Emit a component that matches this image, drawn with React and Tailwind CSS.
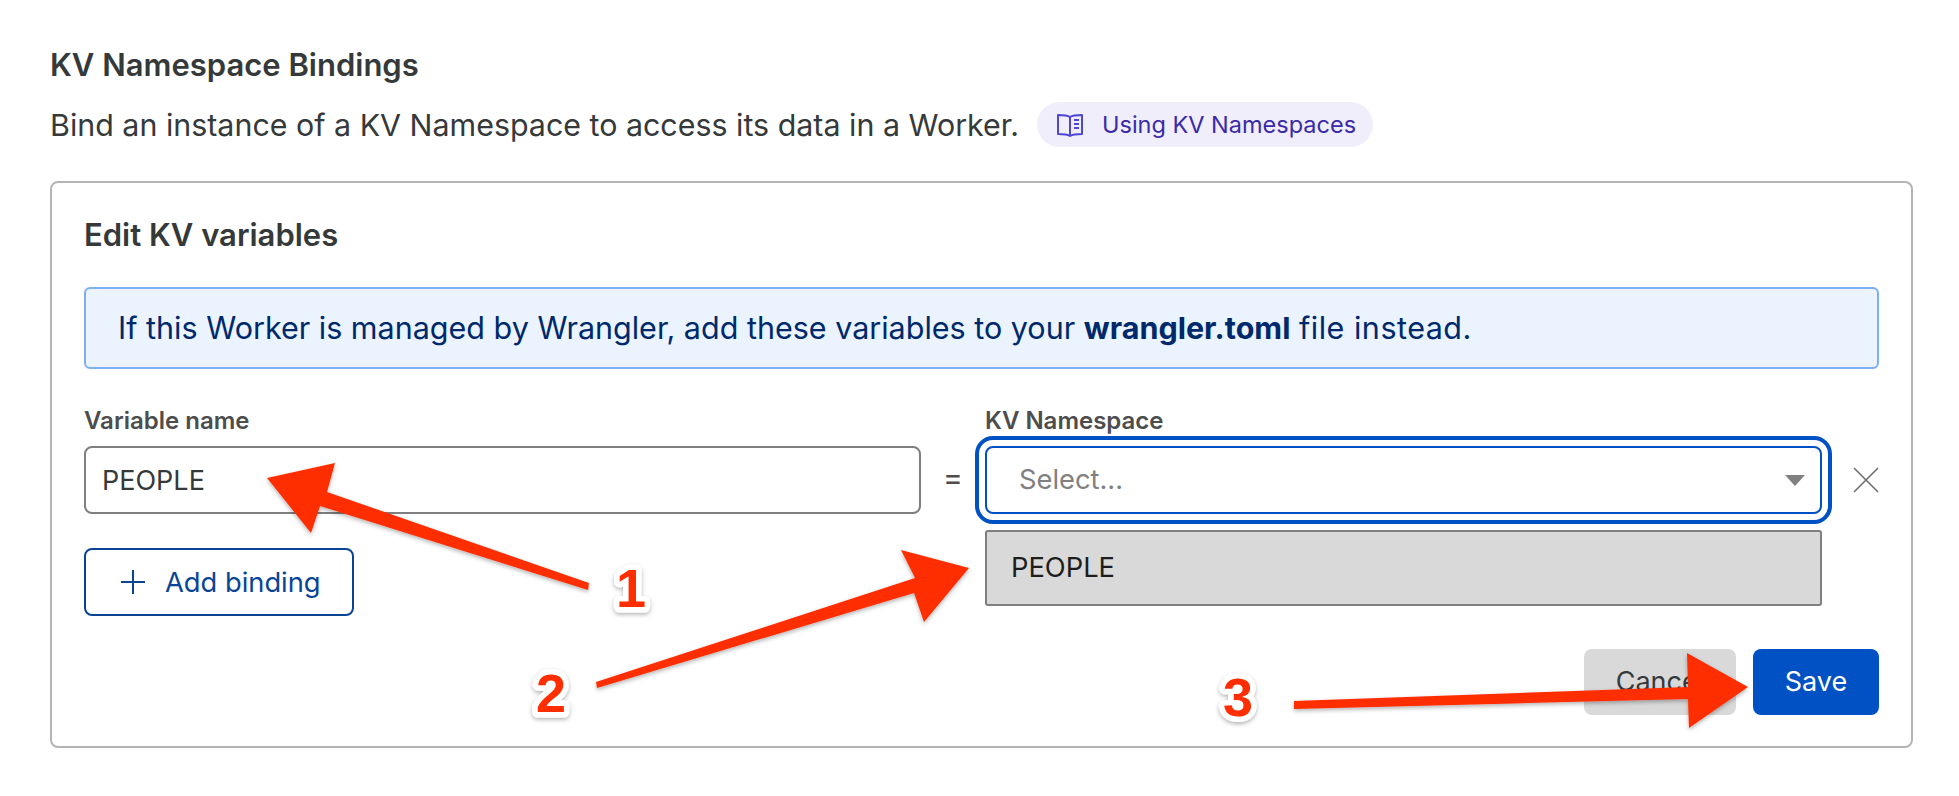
const BOOK = (
    <svg width="28" height="26" viewBox="0 0 28 26" fill="none" stroke="#4f46d8" strokeWidth="2">
        <path d="M14 5 C11 3 6 3 2 3 V22 C6 22 11 22 14 24 C17 22 22 22 26 22 V3 C22 3 17 3 14 5 Z" strokeLinejoin="round" />
        <path d="M14 5 V24" />
        <path d="M18 8 H23 M18 12 H23 M18 16 H23" strokeWidth="1.8" />
    </svg>
);

function Annotations() {
    return (
        <svg className="absolute inset-0 pointer-events-none" width="1959" height="796" viewBox="0 0 1959 796">
            <defs>
                <filter id="arrowShadow" x="-10%" y="-30%" width="120%" height="160%">
                    <feDropShadow dx="0" dy="2" stdDeviation="2" floodColor="#000" floodOpacity="0.3" />
                </filter>
            </defs>
            <g fill="#ff2d00" filter="url(#arrowShadow)">
                <polygon points="267,478 335,463 327,492 589,583 588,590 320,506 311,533" />
                <polygon points="969,568 901,550 915,578 596,682 597,688 914,593 924,622" />
                <polygon points="1748,687 1687,653 1688,687 1294,701 1294,709 1688,699 1689,728" />
            </g>
            <g fontFamily="'Liberation Sans', Arial, sans-serif" fontWeight="700" fontSize="54" fill="#ff2d00" stroke="#fff" strokeWidth="11" strokeLinejoin="round" textAnchor="middle" filter="url(#arrowShadow)" style={{ paintOrder: 'stroke' }}>
                <text x="631" y="607">1</text>
                <text x="551" y="712">2</text>
                <text x="1238" y="716">3</text>
            </g>
        </svg>
    );
}

export default function App() {
    return (
        <div className="relative h-[796px] w-[1959px] overflow-hidden bg-white pl-[50px] pr-[46px] pt-[46px] font-['Inter',sans-serif] text-[#36393a]">
            <h2 className="text-[31px] leading-[38px] font-semibold">KV Namespace Bindings</h2>
            <div className="mt-[18px] flex h-[45px] items-center">
                <p className="w-[971px] text-[30.4px] leading-[38px] whitespace-nowrap">Bind an instance of a KV Namespace to access its data in a Worker.</p>
                <a className="ml-[16px] flex h-[45px] w-[336px] items-center rounded-full bg-[#f0eefb] pl-[19px] text-[23.5px] whitespace-nowrap text-[#3a2aa8]">
                    {BOOK}
                    <span className="ml-[18px]">Using KV Namespaces</span>
                </a>
            </div>

            <div className="mt-[34px] h-[567px] rounded-[8px] border-2 border-[#b4b4b4] px-[32px] pt-[34px]">
                <h3 className="text-[31px] leading-[36px] font-semibold">Edit KV variables</h3>
                <div className="mt-[34px] flex h-[82px] items-center rounded-[6px] border-2 border-[#7db0ee] bg-[#eaf3fe] pl-[32px] text-[30.5px] whitespace-nowrap text-[#00296b]">
                    <span>If this Worker is managed by Wrangler, add these variables to your <b className="font-bold">wrangler.toml</b> <span className="tracking-[0.5px]">file instead.</span></span>
                </div>

                <div className="mt-[38px] flex items-start">
                    <div className="w-[837px]">
                        <label className="block text-[24px] leading-[28px] font-semibold text-[#4d4d4d]">Variable name</label>
                        <div className="mt-[11px] flex h-[68px] items-center rounded-[8px] border-2 border-[#7f7f7f] pl-[16px] pt-[2px] text-[27px]">PEOPLE</div>
                        <button className="mt-[34px] flex h-[68px] w-[270px] items-center rounded-[8px] border-2 border-[#0a4595] pl-[34px] text-[27.3px] text-[#0a4595]">
                            <svg width="26" height="26" viewBox="0 0 26 26" stroke="#0a4595" strokeWidth="2"><path d="M13 1 V25 M1 13 H25" /></svg>
                            <span className="ml-[19px] pt-[3px]">Add binding</span>
                        </button>
                    </div>
                    <div className="flex h-[107px] w-[64px] items-end justify-center pb-[19px] text-[30px] leading-[36px] text-[#4d4d4d]">=</div>
                    <div className="relative w-[837px]">
                        <label className="block text-[24px] leading-[28px] font-semibold text-[#4d4d4d]">KV Namespace</label>
                        <div className="relative mt-[11px] flex h-[68px] items-center justify-between rounded-[8px] border-2 border-[#0051c3] pl-[32px] pr-[15px] text-[27.3px] text-[#808080] outline-4 outline-offset-[6px] outline-[#0051c3]">
                            <span className="pt-[1px]">Select...</span>
                            <svg width="20" height="11" viewBox="0 0 20 11"><path d="M0 0 H20 L10 11 Z" fill="#808080" /></svg>
                        </div>
                        <div className="absolute left-0 right-0 top-[123px] flex h-[76px] items-center rounded-[3px] border-2 border-[#7f7f7f] bg-[#d9d9d9] pl-[24px] pt-[1px] text-[27.3px] text-[#1d1d1d]">PEOPLE</div>
                    </div>
                    <div className="flex h-[107px] flex-1 items-end justify-end pb-[21px]">
                        <svg width="26" height="26" viewBox="0 0 26 26" stroke="#6f6f6f" strokeWidth="1.6"><path d="M1 1 L25 25 M25 1 L1 25" /></svg>
                    </div>
                </div>

                <div className="mt-[33px] flex justify-end gap-[17px]">
                    <button className="h-[66px] w-[152px] rounded-[8px] bg-[#d9d9d9] pt-[1px] text-[27px] text-[#36393a]">Cancel</button>
                    <button className="h-[66px] w-[126px] rounded-[8px] bg-[#0051c3] pt-[1px] text-[27px] text-white">Save</button>
                </div>
            </div>

            <Annotations />
        </div>
    );
}
